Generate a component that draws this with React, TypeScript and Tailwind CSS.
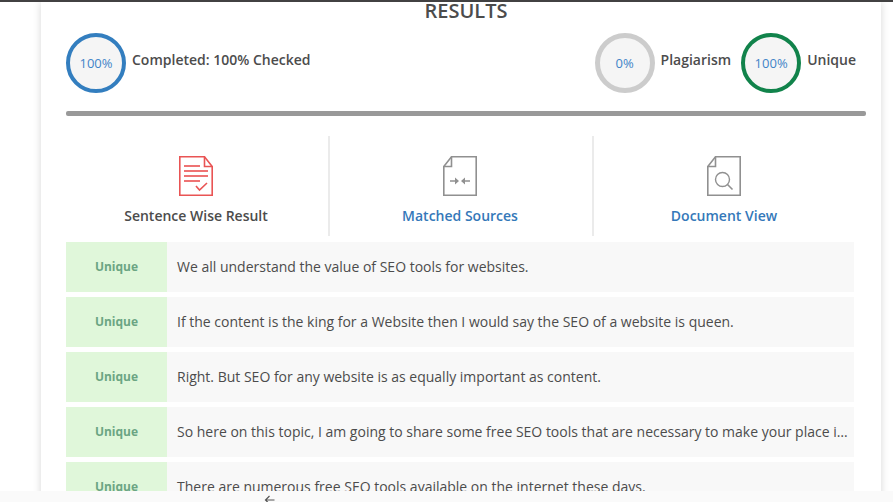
import clsx from "clsx";

const sentences = [
  "We all understand the value of SEO tools for websites.",
  "If the content is the king for a Website then I would say the SEO of a website is queen.",
  "Right. But SEO for any website is as equally important as content.",
  "So here on this topic, I am going to share some free SEO tools that are necessary to make your place in the market.",
  "There are numerous free SEO tools available on the internet these days.",
];

function Circle({ value, ring }: { value: string; ring: string }) {
  return (
    <div
      className={clsx(
        "flex size-15 shrink-0 items-center justify-center rounded-full bg-[#f5f5f5] text-[13px] font-normal text-[#4284c8]",
        ring
      )}
    >
      {value}
    </div>
  );
}

function SentenceIcon() {
  return (
    <svg width="34" height="40" viewBox="0 0 34 40" fill="none" stroke="#e95454" strokeWidth="1.6">
      <path d="M0.8 0.8H25.5L33.2 10.5V39.2H0.8Z" />
      <path d="M25.5 0.8V10.5H33.2" />
      <path d="M5 10H21M5 15H29M5 20H29M5 25H21" stroke="#ee7373" strokeWidth="2" />
      <path d="M17 30L20.5 34L28 27" />
    </svg>
  );
}

function MatchedIcon() {
  return (
    <svg width="34" height="40" viewBox="0 0 34 40" fill="none" stroke="#909090" strokeWidth="1.6">
      <path d="M8.5 0.8H33.2V39.2H0.8V10.5Z" />
      <path d="M8.5 0.8V10.5H0.8" />
      <path d="M7 25H13M21 25H27" />
      <path d="M12 21.5L16 25L12 28.5ZM22 21.5L18 25L22 28.5Z" fill="#909090" stroke="none" />
    </svg>
  );
}

function DocumentIcon() {
  return (
    <svg width="34" height="40" viewBox="0 0 34 40" fill="none" stroke="#909090" strokeWidth="1.6">
      <path d="M8.5 0.8H33.2V39.2H0.8V10.5Z" />
      <path d="M8.5 0.8V10.5H0.8" />
      <circle cx="15.5" cy="23.5" r="7" strokeWidth="1.4" />
      <path d="M20.5 28.5L25.5 33.5" />
    </svg>
  );
}

const tabs = [
  { label: "Sentence Wise Result", icon: <SentenceIcon />, active: true },
  { label: "Matched Sources", icon: <MatchedIcon />, active: false },
  { label: "Document View", icon: <DocumentIcon />, active: false },
];

export default function App() {
  return (
    <div className="flex h-screen flex-col overflow-hidden border-t-2 border-[#424142] bg-white font-['Open_Sans',sans-serif] text-[#4c4c4c]">
      <main className="min-h-0 flex-1 overflow-hidden pr-3 pl-[41px]">
        <section className="pr-[15px] pl-[25px] shadow-[0_0_8px_rgba(0,0,0,0.16)]">
          <h1 className="text-center text-xl leading-[18px] font-semibold">RESULTS</h1>

          {/* totals */}
          <div className="mt-[13px] flex items-center justify-between text-sm font-semibold">
            <div className="flex items-center gap-1.5">
              <Circle value="100%" ring="border-4 border-[#337ebf]" />
              <span className="pb-1.5">Completed: 100% Checked</span>
            </div>
            <div className="flex items-center gap-2.5 pr-2.5">
              <div className="flex items-center gap-1.5">
                <Circle value="0%" ring="border-5 border-[#cccccc]" />
                <span className="pb-1.5">Plagiarism</span>
              </div>
              <div className="flex items-center gap-1.5">
                <Circle value="100%" ring="border-4 border-[#11834b]" />
                <span className="pb-1.5">Unique</span>
              </div>
            </div>
          </div>
          <div className="mt-[18px] h-[5px] rounded-xs bg-[#999999]" />

          {/* views */}
          <nav className="mt-5 mr-2 grid grid-cols-3 text-sm font-semibold">
            {tabs.map((tab) => (
              <a
                key={tab.label}
                href="#"
                className={clsx(
                  "flex h-[100px] flex-col items-center gap-2.5 border-r-2 border-[#ebebeb] pt-5 pr-0.5 last:border-transparent",
                  tab.active ? "text-[#4c4c4c]" : "text-[#3478b9]"
                )}
              >
                {tab.icon}
                <span>{tab.label}</span>
              </a>
            ))}
          </nav>

          <ul className="mt-1.5 mr-3 flex flex-col gap-[5px]">
            {sentences.map((sentence) => (
              <li key={sentence} className="flex h-[50px] items-center bg-[#f8f8f8]">
                <span className="flex h-full w-[101px] shrink-0 items-center justify-center bg-[#e0f7da] text-xs font-bold text-[#6ba583]">
                  Unique
                </span>
                <span className="min-w-0 flex-1 truncate pr-1.5 pl-2.5 text-sm">{sentence}</span>
              </li>
            ))}
          </ul>
        </section>
      </main>

      <footer className="h-[11px] shrink-0 overflow-hidden bg-[#fafafa] pt-1 pl-[264px]">
        <svg width="11" height="10" viewBox="0 0 11 10" fill="none" stroke="#555555" strokeWidth="1.2">
          <path d="M10.5 5H1.5M5.5 1L1.5 5L5.5 9" />
        </svg>
      </footer>
    </div>
  );
}
